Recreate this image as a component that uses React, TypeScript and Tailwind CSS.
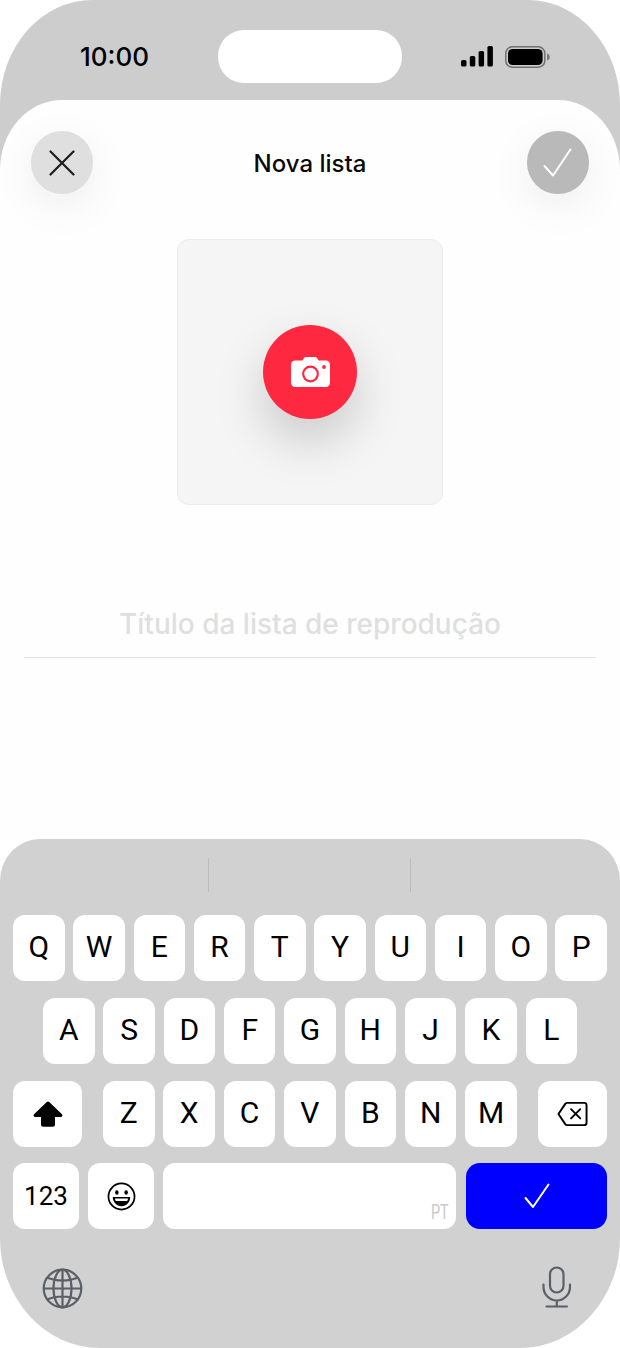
import React from "react";

const rowOne = ["Q", "W", "E", "R", "T", "Y", "U", "I", "O", "P"];
const rowTwo = ["A", "S", "D", "F", "G", "H", "J", "K", "L"];
const rowThree = ["Z", "X", "C", "V", "B", "N", "M"];

function Key({ label }: { label: string }) {
  return (
    <div className="flex h-[66px] w-[51.5px] shrink-0 items-center justify-center rounded-[12px] bg-white pb-[3px] text-[30px] leading-none text-black [font-family:Roboto,sans-serif]">
      {label}
    </div>
  );
}

function StatusBar() {
  return (
    <div className="flex h-[100px] items-start pl-[80px] pt-[30px]">
      <div className="flex h-[54px] w-[138px] items-center text-[26px] font-medium leading-none text-black">
        10:00
      </div>
      <div className="h-[53px] w-[184px] rounded-[26px] bg-white" />
      <div className="ml-[59px] flex h-[53px] items-center gap-[12px]">
        <svg width="32" height="21" viewBox="0 0 32 21" fill="#000">
          <rect x="0" y="14" width="5.5" height="6.5" rx="1.6" />
          <rect x="8.8" y="10" width="5.5" height="10.5" rx="1.6" />
          <rect x="17.6" y="5" width="5.5" height="15.5" rx="1.6" />
          <rect x="26.4" y="0" width="5.5" height="20.5" rx="1.6" />
        </svg>
        <svg width="45" height="22" viewBox="0 0 45 22">
          <rect x="0.8" y="0.8" width="39" height="20.4" rx="6.5" fill="none" stroke="#6f6f6f" strokeWidth="1.5" />
          <rect x="3" y="3" width="34.6" height="16" rx="4.6" fill="#000" />
          <path d="M42 7.5c1.8.5 2.8 1.9 2.8 3.5s-1 3-2.8 3.5z" fill="#7a7a7a" />
        </svg>
      </div>
    </div>
  );
}

function SheetHeader() {
  return (
    <div className="flex items-center justify-between px-[31px] pt-[31px]">
      <button className="flex h-[63px] w-[62px] items-center justify-center rounded-full bg-[#dfdfdf] shadow-[0_12px_44px_rgba(0,0,0,0.07)]">
        <svg width="26" height="26" viewBox="0 0 26 26" fill="none" stroke="#1c1c1c" strokeWidth="2.2" strokeLinecap="round">
          <path d="M1.500 1.500l23 23M24.500 1.500l-23 23" />
        </svg>
      </button>
      <div className="pt-[2px] text-[24px] font-medium leading-none text-[#0a0a0a]">Nova lista</div>
      <button className="flex h-[63px] w-[62px] items-center justify-center rounded-full bg-[#b9b9b9] shadow-[0_12px_44px_rgba(0,0,0,0.07)]">
        <svg width="29" height="29" viewBox="0 0 29 29" fill="none" stroke="#fff" strokeWidth="2" strokeLinecap="round" strokeLinejoin="round">
          <path d="M1.500 18L10 27.500L27.500 1.500" />
        </svg>
      </button>
    </div>
  );
}

function CoverPicker() {
  return (
    <div className="mx-auto mt-[45px] flex h-[266px] w-[266px] items-center justify-center rounded-[12px] border border-[#ebebeb] bg-[#f5f5f5]">
      <button className="flex h-[94px] w-[94px] items-center justify-center rounded-full bg-[#fe2840] shadow-[0_22px_50px_rgba(0,0,0,0.18)]">
        <svg width="39" height="30" viewBox="0 0 39 30">
          <path
            d="M4 3.500h7.500l1.300-2.200C13.300.5 14 0 15 0h9c1 0 1.700.5 2.200 1.300l1.300 2.200H35c2.200 0 4 1.800 4 4V26c0 2.200-1.800 4-4 4H4c-2.200 0-4-1.800-4-4V7.500c0-2.200 1.800-4 4-4z"
            fill="#fff"
          />
          <circle cx="19.500" cy="17" r="7.300" fill="none" stroke="#fe2840" strokeWidth="2.200" />
          <circle cx="33" cy="10" r="1.900" fill="#fe2840" />
        </svg>
      </button>
    </div>
  );
}

function Keyboard() {
  return (
    <div className="flex h-[509px] flex-col rounded-tl-[40px_42px] rounded-tr-[40px_42px] rounded-bl-[100px_110px] rounded-br-[100px_110px] bg-[#d1d1d1]">
      <div className="flex h-[76px] shrink-0 items-start pl-[208px] pt-[19px]">
        <div className="h-[34px] w-px bg-[#bcbcbc]" />
        <div className="ml-[201px] h-[34px] w-px bg-[#bcbcbc]" />
      </div>

      <div className="flex flex-col gap-[17px]">
        <div className="flex justify-between px-[13px]">
          {rowOne.map((k) => (
            <Key key={k} label={k} />
          ))}
        </div>
        <div className="flex justify-between px-[43px]">
          {rowTwo.map((k) => (
            <Key key={k} label={k} />
          ))}
        </div>
        <div className="flex px-[13px]">
          <div className="flex h-[66px] w-[69px] items-center justify-center rounded-[12px] bg-white">
            <svg width="30" height="26" viewBox="0 0 30 26" fill="#000">
              <path d="M15 0.500c.6 0 1.100.3 1.500.7L29 13.200c1 1 .3 2.800-1.200 2.800H22v7.500c0 1.300-1 2.300-2.300 2.300h-9.400C9 25.800 8 24.800 8 23.500V16H2.200C.7 16 0 14.200 1 13.200L13.500 1.200c.4-.4.900-.7 1.500-.7z" />
            </svg>
          </div>
          <div className="ml-[21px] flex gap-[8.9px]">
            {rowThree.map((k) => (
              <Key key={k} label={k} />
            ))}
          </div>
          <div className="ml-auto flex h-[66px] w-[69px] items-center justify-center rounded-[12px] bg-white">
            <svg width="31" height="26" viewBox="0 0 32 26" fill="none" stroke="#000" strokeWidth="2" strokeLinecap="round" strokeLinejoin="round">
              <path d="M10.500 1.500H28c1.400 0 2.500 1.100 2.500 2.500v18c0 1.400-1.100 2.500-2.500 2.500H10.500c-.7 0-1.300-.3-1.800-.8L1.500 13l7.200-10.700c.5-.5 1.100-.8 1.800-.8z" />
              <path d="M14.500 8l9.500 9.500M24 8l-9.500 9.500" />
            </svg>
          </div>
        </div>
        <div className="-mt-px flex px-[13px]">
          <div className="flex h-[66px] w-[66px] items-center justify-center rounded-[12px] bg-white text-[26px] leading-none text-black [font-family:Roboto,sans-serif]">
            123
          </div>
          <div className="ml-[9px] flex h-[66px] w-[66px] items-center justify-center rounded-[12px] bg-white">
            <svg width="29" height="29" viewBox="0 0 30 30">
              <circle cx="15" cy="15" r="13.500" fill="none" stroke="#000" strokeWidth="1.800" />
              <ellipse cx="10.200" cy="10.800" rx="1.800" ry="2.300" fill="#000" />
              <ellipse cx="19.800" cy="10.800" rx="1.800" ry="2.300" fill="#000" />
              <path d="M6 15.500h18c0 5.500-4 9.500-9 9.500s-9-4-9-9.500z" fill="#000" />
              <path d="M8.200 17h13.600c-.2 1.200-.5 2-1 2.700H9.200c-.5-.7-.8-1.500-1-2.700z" fill="#fff" />
            </svg>
          </div>
          <div className="ml-[9px] flex h-[66px] w-[293px] items-end justify-end rounded-[12px] bg-white pb-[7px] pr-[7px]">
            <span className="origin-right scale-x-[0.72] text-[20px] leading-none text-[#c9c9c9] [font-family:Roboto,sans-serif]">
              PT
            </span>
          </div>
          <div className="ml-[10px] flex h-[66px] w-[141px] items-center justify-center rounded-[14px] bg-[#0000ff]">
            <svg width="26" height="26" viewBox="0 0 26 26" fill="none" stroke="#fff" strokeWidth="2" strokeLinecap="round" strokeLinejoin="round">
              <path d="M1.500 15L9 24L24.500 1.500" />
            </svg>
          </div>
        </div>
      </div>

      <div className="flex items-center justify-between pl-[42px] pr-[48px] pt-[39px]">
        <svg width="41" height="41" viewBox="0 0 41 41" fill="none" stroke="#5b5f66" strokeWidth="2.200">
          <circle cx="20.500" cy="20.500" r="18.800" />
          <ellipse cx="20.500" cy="20.500" rx="9" ry="18.800" />
          <path d="M20.500 1.700v37.600M1.700 20.500h37.600M5 9.500c9 4 22 4 31 0M5 31.500c9-4 22-4 31 0" />
        </svg>
        <svg className="-mt-[3px]" width="30" height="42" viewBox="0 0 30 42" fill="none" stroke="#5b5f66" strokeWidth="2.200" strokeLinecap="round">
          <rect x="8" y="1.500" width="13.500" height="25" rx="6.700" />
          <path d="M1.500 18.500v2.500c0 7.500 6 13.500 13.300 13.500S28 28.500 28 21v-2.500M14.800 34.500v6M4.500 40.500h20.500" />
        </svg>
      </div>
    </div>
  );
}

export default function App() {
  return (
    <div className="h-[1348px] w-[620px] overflow-hidden bg-white [font-family:Inter,sans-serif]">
      <div className="flex h-[839px] flex-col rounded-tl-[92px_105px] rounded-tr-[92px_105px] bg-[#cdcdcd]">
        <StatusBar />
        <div className="flex-1 rounded-tl-[62px_70px] rounded-tr-[62px_70px] bg-[#fefefe]">
          <SheetHeader />
          <CoverPicker />
          <div className="mx-[24px] mt-[100px] border-b border-[#e2e2e2] pb-[14px] text-center text-[28px] font-medium leading-[38px] text-[#dfdfdf]">
            Título da lista de reprodução
          </div>
        </div>
      </div>
      <Keyboard />
    </div>
  );
}
